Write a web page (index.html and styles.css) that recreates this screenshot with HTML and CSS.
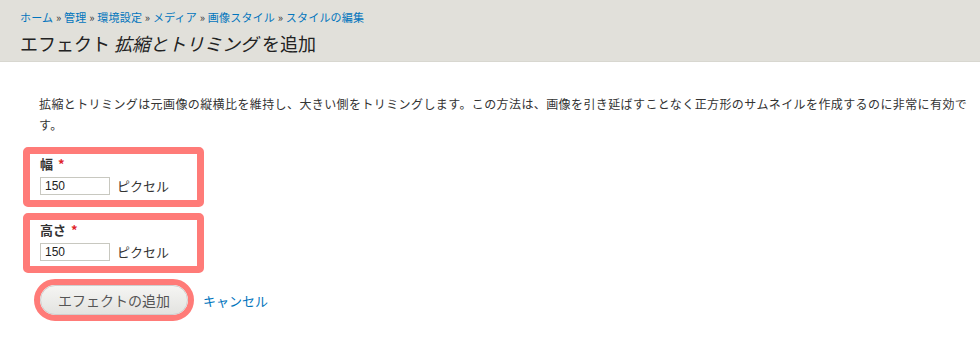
FILE: index.html
```html
<!DOCTYPE html>
<html lang="ja">

<head>
    <meta charset="UTF-8">
    <title>エフェクト 拡縮とトリミング を追加</title>
    <link rel="stylesheet" href="styles.css">
</head>

<body>

    <div class="page-header">
        <div class="breadcrumb">
            <a href="#">ホーム</a> » <a href="#">管理</a> » <a href="#">環境設定</a> » <a href="#">メディア</a> » <a href="#">画像スタイル</a> » <a href="#">スタイルの編集</a>
        </div>
        <h1>エフェクト <em>拡縮とトリミング</em> を追加</h1>
    </div>

    <div class="content">
        <p class="description">拡縮とトリミングは元画像の縦横比を維持し、大きい側をトリミングします。この方法は、画像を引き延ばすことなく正方形のサムネイルを作成するのに非常に有効です。</p>

        <form class="effect-form">
            <div class="form-item">
                <label for="width">幅 <span class="required">*</span></label>
                <div class="field-row">
                    <input type="text" id="width" value="150">
                    <span class="suffix">ピクセル</span>
                </div>
            </div>

            <div class="form-item">
                <label for="height">高さ <span class="required">*</span></label>
                <div class="field-row">
                    <input type="text" id="height" value="150">
                    <span class="suffix">ピクセル</span>
                </div>
            </div>

            <div class="form-actions">
                <span class="button-ring"><button type="submit">エフェクトの追加</button></span>
                <a href="#" class="cancel">キャンセル</a>
            </div>
        </form>
    </div>

</body>

</html>
```

FILE: styles.css
```css
/* Basic reset */
* {
    margin: 0;
    padding: 0;
    box-sizing: border-box;
}

body {
    font-family: "Noto Sans CJK JP", "Noto Sans", sans-serif;
    font-size: 12px;
    color: #333;
    background-color: #fff;
}

a {
    color: #0074bd;
    text-decoration: none;
}

.page-header {
    background-color: #e1e0da;
    height: 62px;
    padding: 8px 20px 0;
    border-bottom: 1px solid #d8d7d0;
}

.breadcrumb {
    font-size: 11px;
    letter-spacing: 0.2px;
    line-height: 18px;
    color: #333;
}

.page-header h1 {
    font-size: 18px;
    font-weight: normal;
    line-height: 26px;
    margin-top: 4px;
    color: #222;
}

.page-header h1 em {
    font-style: italic;
}

.content {
    padding: 31px 10px 0 23px;
}

.description {
    padding-left: 16px;
    line-height: 21px;
    letter-spacing: 0.4px;
    color: #333;
    margin-bottom: 12px;
}

.form-item {
    width: 181px;
    height: 60px;
    border: 7px solid #ff7b78;
    border-radius: 5px;
    padding: 1px 0 0 10px;
    margin-bottom: 6px;
}

.form-item label {
    display: block;
    font-size: 13px;
    font-weight: bold;
    line-height: 18px;
    margin-bottom: 3px;
}

.required {
    color: #e0242a;
    margin-left: 2px;
}

.field-row {
    display: flex;
    align-items: center;
    gap: 7px;
}

.field-row input {
    width: 70px;
    height: 18px;
    border: 1px solid #c8c8c0;
    padding: 0 4px;
    font-family: "Liberation Sans", Arial, sans-serif;
    font-size: 12px;
    color: #222;
}

.suffix {
    font-size: 13px;
}

.form-actions {
    display: flex;
    align-items: center;
    gap: 9px;
    padding-left: 11px;
    margin-top: 4px;
}

.button-ring {
    display: inline-block;
    border: 6px solid #ff7b78;
    border-radius: 22px;
}

.button-ring button {
    display: block;
    width: 148px;
    height: 30px;
    border: 1px solid #cfcfcf;
    border-radius: 15px;
    background: linear-gradient(#f5f5f3, #e3e3e0);
    font-family: inherit;
    font-size: 14px;
    color: #555;
}

.cancel {
    font-size: 13px;
}
```
